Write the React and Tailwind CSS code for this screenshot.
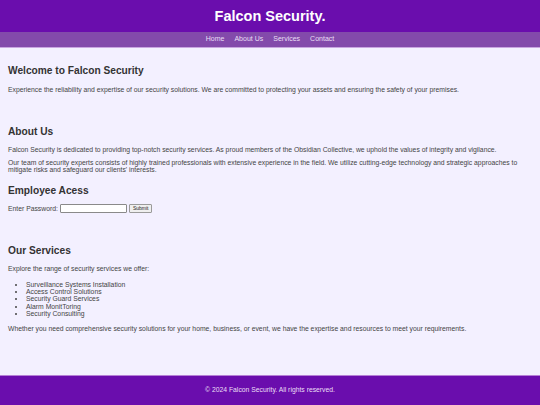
export default function App() {
  const font = { fontFamily: '"Liberation Sans", Arial, sans-serif' };
  return (
    <div className="w-[540px] h-[405px] flex flex-col bg-[#f3f0ff] overflow-hidden" style={font}>
      <header className="bg-[#6a0dad] h-[32px] flex items-center justify-center">
        <h1 className="text-white font-bold text-[14.5px] leading-none">Falcon Security.</h1>
      </header>
      <nav className="bg-[#834aab] h-[16px] flex items-center justify-center gap-[10px] text-[7px] text-[#eadff5] border-b border-[#c8a6e0]">
        <a>Home</a>
        <a>About Us</a>
        <a>Services</a>
        <a>Contact</a>
      </nav>
      <main className="flex-1 px-[8px] text-[6.8px] leading-[1.15] text-[#444]">
        <section className="pt-[16px]">
          <h2 className="text-[10.2px] font-bold leading-[13px] text-[#333]">Welcome to Falcon Security</h2>
          <p className="mt-[9px]">Experience the reliability and expertise of our security solutions. We are committed to protecting your assets and ensuring the safety of your premises.</p>
        </section>
        <section className="pt-[31px]">
          <h2 className="text-[10.2px] font-bold leading-[13px] text-[#333]">About Us</h2>
          <p className="mt-[8px]">Falcon Security is dedicated to providing top-notch security services. As proud members of the Obsidian Collective, we uphold the values of integrity and vigilance.</p>
          <p className="mt-[5px]">Our team of security experts consists of highly trained professionals with extensive experience in the field. We utilize cutting-edge technology and strategic approaches to mitigate risks and safeguard our clients' interests.</p>
          <h2 className="text-[10.2px] font-bold leading-[13px] mt-[10px] text-[#333]">Employee Acess</h2>
          <div className="mt-[7px] flex items-center gap-[2px]">
            <span>Enter Password:</span>
            <input type="password" className="w-[67px] h-[9px] bg-white border border-[#8a8a8a] rounded-[1px]" />
            <button className="h-[9px] px-[3px] text-[5px] bg-[#efefef] border border-[#9a9a9a] rounded-[1px] leading-none text-[#222]">Submit</button>
          </div>
        </section>
        <section className="pt-[31px]">
          <h2 className="text-[10.2px] font-bold leading-[13px] text-[#333]">Our Services</h2>
          <p className="mt-[8px]">Explore the range of security services we offer:</p>
          <ul className="mt-[8px] pl-[18px] list-disc leading-[7.2px]">
            <li>Surveillance Systems Installation</li>
            <li>Access Control Solutions</li>
            <li>Security Guard Services</li>
            <li>Alarm MonitToring</li>
            <li>Security Consulting</li>
          </ul>
          <p className="mt-[8px]">Whether you need comprehensive security solutions for your home, business, or event, we have the expertise and resources to meet your requirements.</p>
        </section>
      </main>
      <footer className="bg-[#6a0dad] h-[30px] border-t border-[#b57fd6] flex items-center justify-center text-[6.8px] text-[#eadff5]">
        © 2024 Falcon Security. All rights reserved.
      </footer>
    </div>
  );
}
